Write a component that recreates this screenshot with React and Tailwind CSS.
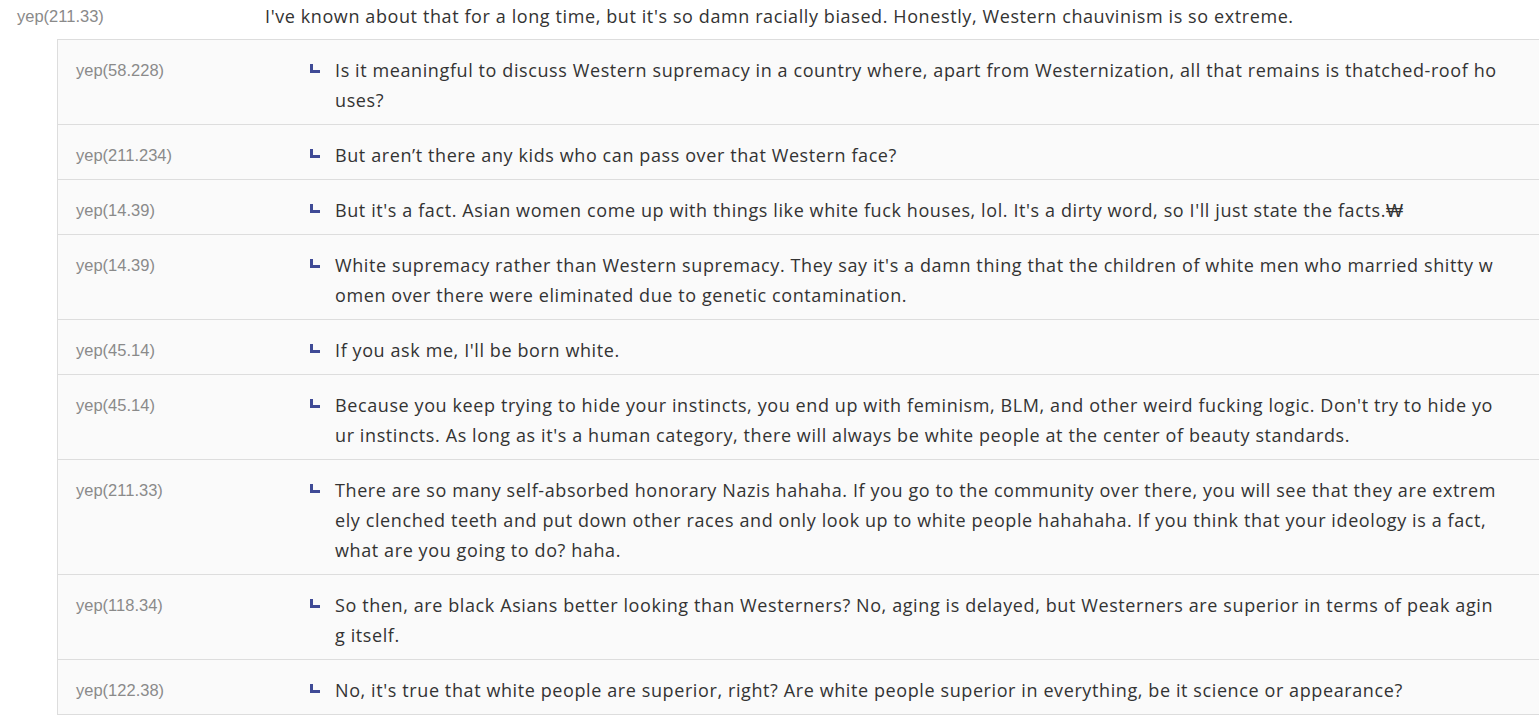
const replies = [
  {
    name: 'yep(58.228)',
    text: 'Is it meaningful to discuss Western supremacy in a country where, apart from Westernization, all that remains is thatched-roof houses?',
  },
  { name: 'yep(211.234)', text: 'But aren’t there any kids who can pass over that Western face?' },
  {
    name: 'yep(14.39)',
    text: "But it's a fact. Asian women come up with things like white fuck houses, lol. It's a dirty word, so I'll just state the facts.₩",
  },
  {
    name: 'yep(14.39)',
    text: "White supremacy rather than Western supremacy. They say it's a damn thing that the children of white men who married shitty women over there were eliminated due to genetic contamination.",
  },
  { name: 'yep(45.14)', text: "If you ask me, I'll be born white." },
  {
    name: 'yep(45.14)',
    text: "Because you keep trying to hide your instincts, you end up with feminism, BLM, and other weird fucking logic. Don't try to hide your instincts. As long as it's a human category, there will always be white people at the center of beauty standards.",
  },
  {
    name: 'yep(211.33)',
    text: 'There are so many self-absorbed honorary Nazis hahaha. If you go to the community over there, you will see that they are extremely clenched teeth and put down other races and only look up to white people hahahaha. If you think that your ideology is a fact, what are you going to do? haha.',
  },
  {
    name: 'yep(118.34)',
    text: 'So then, are black Asians better looking than Westerners? No, aging is delayed, but Westerners are superior in terms of peak aging itself.',
  },
  {
    name: 'yep(122.38)',
    text: "No, it's true that white people are superior, right? Are white people superior in everything, be it science or appearance?",
  },
]

function ReplyMark() {
  return (
    <svg width="10" height="9" viewBox="0 0 10 9" className="mt-[9px] shrink-0">
      <path d="M0 0h3v6h7v3H0z" fill="#3f4a96" />
    </svg>
  )
}

function Reply({ name, text }) {
  return (
    <li className="flex border-b border-[#dddddd] pt-[15px] pb-[9px] pl-[18px]">
      <span className="w-[234px] shrink-0 text-[16.5px] leading-[30px] text-[#8a8a8a] font-['Liberation_Sans',sans-serif]">
        {name}
      </span>
      <ReplyMark />
      <p className="ml-[15px] w-[1164px] break-all text-[18px] leading-[30px] tracking-[0.6px] text-[#333333]">
        {text}
      </p>
    </li>
  )
}

export default function App() {
  return (
    <div className="h-[724px] w-[1539px] overflow-hidden bg-white font-['Open_Sans',sans-serif]">
      <div className="flex pl-[17px] pt-[1px] pb-[8px]">
        <span className="w-[248px] shrink-0 text-[16.5px] leading-[30px] text-[#8a8a8a] font-['Liberation_Sans',sans-serif]">
          yep(211.33)
        </span>
        <p className="text-[18px] leading-[30px] tracking-[0.6px] text-[#333333]">
          I've known about that for a long time, but it's so damn racially biased. Honestly, Western chauvinism is so extreme.
        </p>
      </div>
      <ul className="ml-[57px] w-[1500px] border-l border-t border-[#dddddd] bg-[#fafafa]">
        {replies.map((r, i) => (
          <Reply key={i} {...r} />
        ))}
      </ul>
    </div>
  )
}
